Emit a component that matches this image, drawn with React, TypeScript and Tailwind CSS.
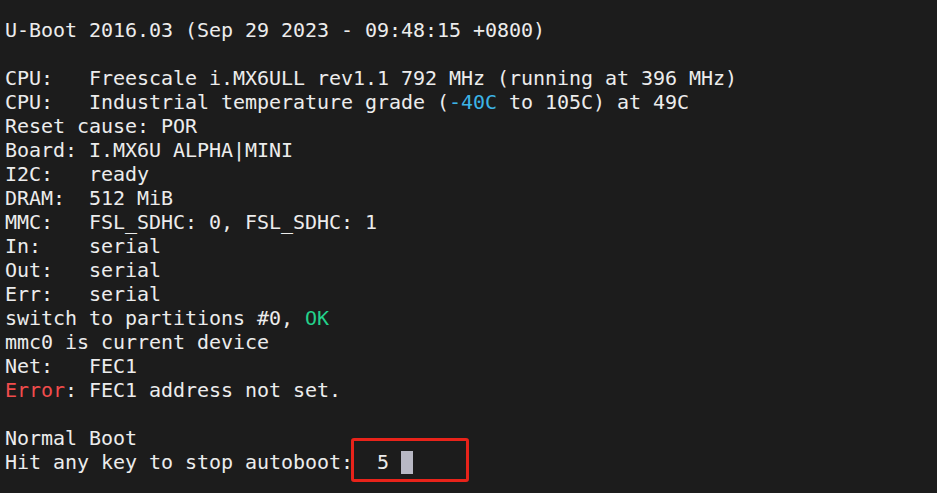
import React from "react";

const Line = ({ children }: { children?: React.ReactNode }) => (
  <div className="h-[24px] whitespace-pre">{children ?? " "}</div>
);

const App = () => {
  return (
    <div className="relative w-[937px] h-[493px] overflow-hidden bg-[#1c1c1c] text-[#ececec] text-[20px] leading-[24px] tracking-[-0.04px] pl-[5px] pt-[18px] font-['DejaVu_Sans_Mono',monospace]">
      <Line>U-Boot 2016.03 (Sep 29 2023 - 09:48:15 +0800)</Line>
      <Line />
      <Line>CPU:   Freescale i.MX6ULL rev1.1 792 MHz (running at 396 MHz)</Line>
      <Line>
        CPU:   Industrial temperature grade (<span className="text-[#3cb4e6]">-40C</span> to 105C) at 49C
      </Line>
      <Line>Reset cause: POR</Line>
      <Line>Board: I.MX6U ALPHA|MINI</Line>
      <Line>I2C:   ready</Line>
      <Line>DRAM:  512 MiB</Line>
      <Line>MMC:   FSL_SDHC: 0, FSL_SDHC: 1</Line>
      <Line>In:    serial</Line>
      <Line>Out:   serial</Line>
      <Line>Err:   serial</Line>
      <Line>
        switch to partitions #0, <span className="text-[#23d18b]">OK</span>
      </Line>
      <Line>mmc0 is current device</Line>
      <Line>Net:   FEC1</Line>
      <Line>
        <span className="text-[#f14c4c]">Error</span>: FEC1 address not set.
      </Line>
      <Line />
      <Line>Normal Boot</Line>
      <Line>
        Hit any key to stop autoboot:  5{" "}
        <span className="inline-block w-[12px] h-[23px] align-[-5px] bg-[#b8b8c4]" />
      </Line>

      {/* annotation box */}
      <div className="absolute left-[351px] top-[438px] w-[118px] h-[44px] border-[3px] border-[#e8231a] rounded-[3px]" />
    </div>
  );
};

export default App;
